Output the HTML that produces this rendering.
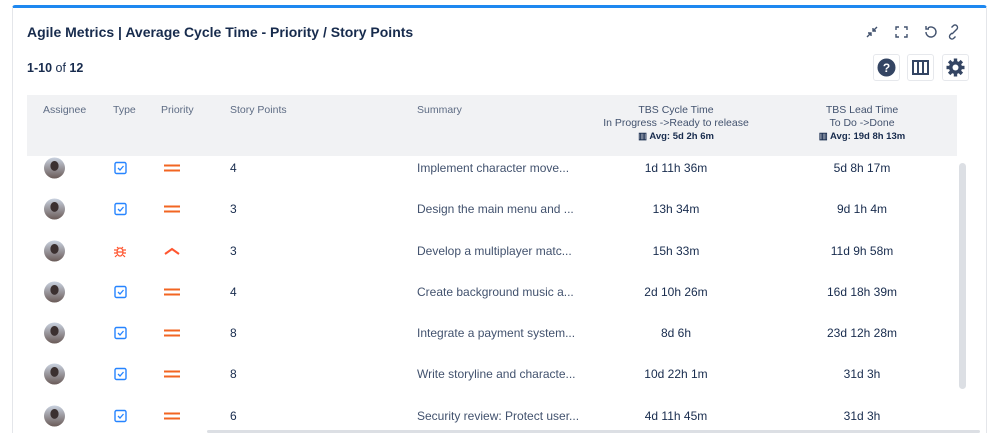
<!DOCTYPE html>
<html><head><style>
*{margin:0;padding:0;box-sizing:border-box}
html,body{width:999px;height:433px;overflow:hidden}
body{background:#fff;font-family:"Liberation Sans",sans-serif;color:#172b4d;position:relative}
.card{position:absolute;left:12px;top:5px;width:975px;height:440px;border:1px solid #e4e6ea;border-top:3px solid #1e88f0;border-radius:3px}
.abs{position:absolute}
.title{left:27px;top:24px;font-size:14px;font-weight:bold;color:#172b4d}
.cnt{left:27px;top:61px;font-size:12.5px}
.btn{position:absolute;top:54px;width:27px;height:27px;border:1px solid #e6e8ec;border-radius:3px;background:#fff}
.hdr{left:27px;top:95px;width:930px;height:61px;background:#f1f2f4}
.h{position:absolute;top:104px;font-size:10.5px;color:#5e6c84}
.hc{position:absolute;text-align:center;font-size:10.5px;color:#42526e;line-height:13px;top:104px;width:200px}
.row{position:absolute;left:0;width:960px;height:41px;font-size:12px;color:#172b4d}
.row>*{position:absolute;top:50%;transform:translateY(-50%)}
.av{left:44px;width:21px;height:21px;border-radius:50%;background:radial-gradient(ellipse at 50% 40%,#3b3030 0 26%,transparent 29%),linear-gradient(#c9d2e0,#6a5b58)}
.sum{left:417px;color:#42526e}
.ct{left:576px;width:200px;text-align:center}
.lt{left:762px;width:200px;text-align:center}
</style></head><body>
<div class="card"></div>
<div class="abs title">Agile Metrics | Average Cycle Time - Priority / Story Points</div>
<div class="abs cnt"><b>1-10</b> of <b>12</b></div>
<svg class="abs" style="left:864px;top:24px" width="100" height="16" viewBox="0 0 100 16" fill="none" stroke="#42526e" stroke-width="1.4">
<path d="M3 13l4-4M4 9h3v3M13 3l-4 4M9 4v3h3"/>
<path d="M32 6V3h3M40 3h3v3M43 10v3h-3M35 13h-3v-3"/>
<path d="M64 4a5 5 0 1 1-2 4M62 2v3h3"/>
<path d="M88 9l-2 2a2.5 2.5 0 0 0 3.5 3.5l2-2M91 7l2-2a2.5 2.5 0 0 0-3.5-3.5l-2 2M88 10l4-4"/>
</svg>
<div class="btn" style="left:873px"><svg width="25" height="25"><circle cx="12.5" cy="12.5" r="9" fill="#344563"/><text x="12.5" y="17" font-size="12" font-weight="bold" fill="#fff" text-anchor="middle" font-family="Liberation Sans">?</text></svg></div>
<div class="btn" style="left:907px"><svg width="25" height="25" fill="none" stroke="#344563" stroke-width="2"><rect x="5" y="6" width="15" height="13"/><path d="M10 6v13M15 6v13"/></svg></div>
<div class="btn" style="left:942px"><svg width="25" height="25" viewBox="0 0 25 25"><g fill="#344563"><circle cx="12.5" cy="12.5" r="6.5"/><rect x="10.8" y="3.5" width="3.4" height="18"/><rect x="3.5" y="10.8" width="18" height="3.4"/><rect x="10.8" y="3.5" width="3.4" height="18" transform="rotate(45 12.5 12.5)"/><rect x="10.8" y="3.5" width="3.4" height="18" transform="rotate(-45 12.5 12.5)"/></g><circle cx="12.5" cy="12.5" r="3" fill="#fff"/></svg></div>
<div class="abs hdr"></div>
<div class="h" style="left:43px">Assignee</div>
<div class="h" style="left:113px">Type</div>
<div class="h" style="left:161px">Priority</div>
<div class="h" style="left:230px">Story Points</div>
<div class="h" style="left:417px">Summary</div>
<div class="hc" style="left:576px">TBS Cycle Time<br>In Progress -&gt;Ready to release<br><b style="font-size:9.5px;color:#172b4d">▥ Avg: 5d 2h 6m</b></div>
<div class="hc" style="left:762px">TBS Lead Time<br>To Do -&gt;Done<br><b style="font-size:9.5px;color:#172b4d">▥ Avg: 19d 8h 13m</b></div>
<div class="row" style="top:147px"><div class="av"></div><svg style="left:114px" width="13" height="13"><rect x="1" y="1" width="11" height="11" rx="1.5" fill="none" stroke="#2684ff" stroke-width="1.4"/><path d="M4 6.5l2 2 3.5-4" fill="none" stroke="#2684ff" stroke-width="1.3"/></svg><svg style="left:164px" width="16" height="8"><path d="M0 1.5h16M0 6.5h16" stroke="#f26522" stroke-width="2"/></svg><div style="left:230px">4</div><div class="sum">Implement character move...</div><div class="ct">1d 11h 36m</div><div class="lt">5d 8h 17m</div></div>
<div class="row" style="top:188px"><div class="av"></div><svg style="left:114px" width="13" height="13"><rect x="1" y="1" width="11" height="11" rx="1.5" fill="none" stroke="#2684ff" stroke-width="1.4"/><path d="M4 6.5l2 2 3.5-4" fill="none" stroke="#2684ff" stroke-width="1.3"/></svg><svg style="left:164px" width="16" height="8"><path d="M0 1.5h16M0 6.5h16" stroke="#f26522" stroke-width="2"/></svg><div style="left:230px">3</div><div class="sum">Design the main menu and ...</div><div class="ct">13h 34m</div><div class="lt">9d 1h 4m</div></div>
<div class="row" style="top:230px"><div class="av"></div><svg style="left:113px" width="14" height="14" fill="none" stroke="#ff5630" stroke-width="1.2"><ellipse cx="7" cy="8" rx="3" ry="4"/><path d="M4 3l1.5 1.5M10 3L8.5 4.5M1 6h3M10 6h3M1 9h3M10 9h3M2 13l2-2M12 13l-2-2M4 8h6"/></svg><svg style="left:164px" width="16" height="8"><path d="M1 7l7-5 7 5" fill="none" stroke="#ff5630" stroke-width="2"/></svg><div style="left:230px">3</div><div class="sum">Develop a multiplayer matc...</div><div class="ct">15h 33m</div><div class="lt">11d 9h 58m</div></div>
<div class="row" style="top:271px"><div class="av"></div><svg style="left:114px" width="13" height="13"><rect x="1" y="1" width="11" height="11" rx="1.5" fill="none" stroke="#2684ff" stroke-width="1.4"/><path d="M4 6.5l2 2 3.5-4" fill="none" stroke="#2684ff" stroke-width="1.3"/></svg><svg style="left:164px" width="16" height="8"><path d="M0 1.5h16M0 6.5h16" stroke="#f26522" stroke-width="2"/></svg><div style="left:230px">4</div><div class="sum">Create background music a...</div><div class="ct">2d 10h 26m</div><div class="lt">16d 18h 39m</div></div>
<div class="row" style="top:312px"><div class="av"></div><svg style="left:114px" width="13" height="13"><rect x="1" y="1" width="11" height="11" rx="1.5" fill="none" stroke="#2684ff" stroke-width="1.4"/><path d="M4 6.5l2 2 3.5-4" fill="none" stroke="#2684ff" stroke-width="1.3"/></svg><svg style="left:164px" width="16" height="8"><path d="M0 1.5h16M0 6.5h16" stroke="#f26522" stroke-width="2"/></svg><div style="left:230px">8</div><div class="sum">Integrate a payment system...</div><div class="ct">8d 6h</div><div class="lt">23d 12h 28m</div></div>
<div class="row" style="top:353px"><div class="av"></div><svg style="left:114px" width="13" height="13"><rect x="1" y="1" width="11" height="11" rx="1.5" fill="none" stroke="#2684ff" stroke-width="1.4"/><path d="M4 6.5l2 2 3.5-4" fill="none" stroke="#2684ff" stroke-width="1.3"/></svg><svg style="left:164px" width="16" height="8"><path d="M0 1.5h16M0 6.5h16" stroke="#f26522" stroke-width="2"/></svg><div style="left:230px">8</div><div class="sum">Write storyline and characte...</div><div class="ct">10d 22h 1m</div><div class="lt">31d 3h</div></div>
<div class="row" style="top:395px"><div class="av"></div><svg style="left:114px" width="13" height="13"><rect x="1" y="1" width="11" height="11" rx="1.5" fill="none" stroke="#2684ff" stroke-width="1.4"/><path d="M4 6.5l2 2 3.5-4" fill="none" stroke="#2684ff" stroke-width="1.3"/></svg><svg style="left:164px" width="16" height="8"><path d="M0 1.5h16M0 6.5h16" stroke="#f26522" stroke-width="2"/></svg><div style="left:230px">6</div><div class="sum">Security review: Protect user...</div><div class="ct">4d 11h 45m</div><div class="lt">31d 3h</div></div>
<div class="abs" style="left:959px;top:163px;width:7px;height:226px;background:#dcdfe4;border-radius:4px"></div>
<div class="abs" style="left:207px;top:430px;width:773px;height:3px;background:#dcdfe4;border-radius:2px"></div>
</body></html>
